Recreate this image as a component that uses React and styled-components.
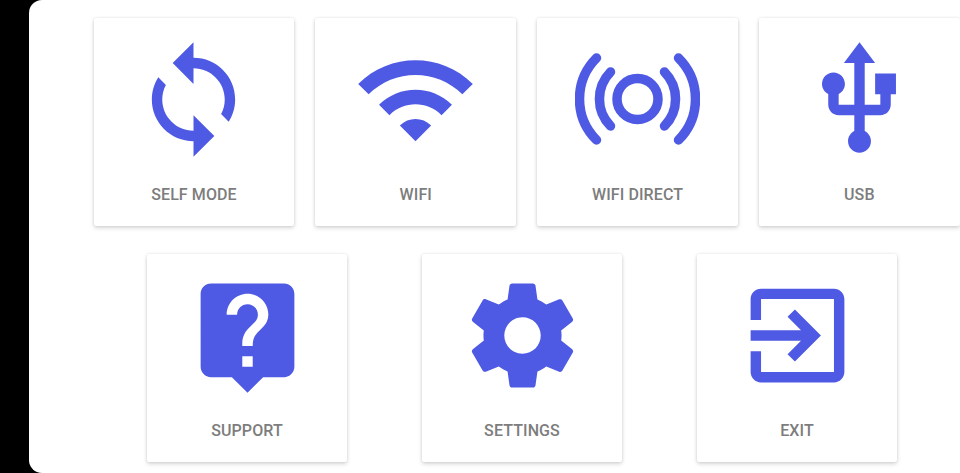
import React from "react";
import styled, { createGlobalStyle } from "styled-components";

const Global = createGlobalStyle`
  html, body { margin: 0; padding: 0; width: 960px; height: 473px; overflow: hidden; background: #000; }
  #root { width: 960px; height: 473px; }
`;

const Screen = styled.main`
  width: 960px;
  height: 473px;
  background: #000;
  padding-left: 29px;
  box-sizing: border-box;
  display: flex;
`;

const Panel = styled.section`
  flex: 1;
  background: #fff;
  border-radius: 13px 0 0 13px;
  box-sizing: border-box;
  padding-top: 18px;
  display: flex;
  flex-direction: column;
  gap: 28px;
  overflow: hidden;
`;

const Row = styled.div`
  display: flex;
  gap: ${(p) => p.$gap}px;
  padding-left: ${(p) => p.$inset}px;
`;

const Card = styled.button`
  flex: 0 0 ${(p) => p.$width}px;
  width: ${(p) => p.$width}px;
  height: 208px;
  border: 0;
  padding: 18.5px 0 0;
  margin: 0;
  background: #fff;
  border-radius: 2px;
  box-shadow: 0 2px 4px rgba(0, 0, 0, 0.16), 0 0 3px rgba(0, 0, 0, 0.09);
  display: flex;
  flex-direction: column;
  align-items: center;
`;

const Icon = styled.svg`
  display: block;
  width: 125px;
  height: 125px;
  flex: none;
  fill: #4f5ae4;
`;

const Label = styled.span`
  margin-top: 24px;
  font-family: Roboto, "Liberation Sans", sans-serif;
  font-weight: 500;
  font-size: 16px;
  letter-spacing: 0.1px;
  line-height: 18px;
  color: #7d7d7d;
  white-space: nowrap;
`;

const Arc = styled.path`
  fill: none;
  stroke: #4f5ae4;
  stroke-width: 9.5;
  stroke-linecap: round;
`;

const Ring = styled.circle`
  fill: none;
  stroke: #4f5ae4;
  stroke-width: 9.5;
`;

const material = (d) => (
  <Icon viewBox="0 0 24 24" aria-hidden="true">
    <path d={d} />
  </Icon>
);

const icons = {
  sync: material("M12 4V1L8 5l4 4V6c3.31 0 6 2.69 6 6 0 1.01-.25 1.97-.7 2.8l1.46 1.46C19.54 15.03 20 13.57 20 12c0-4.42-3.58-8-8-8zm0 14c-3.31 0-6-2.69-6-6 0-1.01.25-1.97.7-2.8L5.24 7.74C4.46 8.97 4 10.43 4 12c0 4.42 3.58 8 8 8v3l4-4-4-4v3z"),
  wifi: material("M1 9l2 2c4.97-4.97 13.03-4.97 18 0l2-2C16.93 2.93 7.08 2.93 1 9zm8 8l3 3 3-3c-1.65-1.66-4.34-1.66-6 0zm-4-4l2 2c2.76-2.76 7.24-2.76 10 0l2-2C15.14 9.14 8.87 9.14 5 13z"),
  direct: (
    <Icon viewBox="0 0 125 125" aria-hidden="true">
      <Ring cx="62.5" cy="62" r="20.5" />
      <Arc d="M35.5 35A38.5 38.5 0 0 0 35.5 89" />
      <Arc d="M89.5 35A38.5 38.5 0 0 1 89.5 89" />
      <Arc d="M21.5 21A58 58 0 0 0 21.5 103" />
      <Arc d="M103.5 21A58 58 0 0 1 103.5 103" />
    </Icon>
  ),
  usb: material("M15 7v4h1v2h-3V5h2l-3-4-3 4h2v8H8v-2.07c.7-.37 1.2-1.08 1.2-1.93 0-1.21-.99-2.2-2.2-2.2-1.21 0-2.2.99-2.2 2.2 0 .85.5 1.56 1.2 1.93V13c0 1.11.89 2 2 2h3v3.05c-.71.37-1.2 1.1-1.2 1.95 0 1.22.99 2.2 2.2 2.2 1.21 0 2.2-.98 2.2-2.2 0-.85-.49-1.58-1.2-1.95V15h3c1.11 0 2-.89 2-2v-2h1V7h-4z"),
  support: material("M19 2H5c-1.11 0-2 .9-2 2v14c0 1.1.89 2 2 2h4l3 3 3-3h4c1.1 0 2-.9 2-2V4c0-1.1-.9-2-2-2zm-6 16h-2v-2h2v2zm2.07-7.75l-.9.92C13.45 11.9 13 12.5 13 14h-2v-.5c0-1.1.45-2.1 1.17-2.83l1.24-1.26c.37-.36.59-.86.59-1.41 0-1.1-.9-2-2-2s-2 .9-2 2H8c0-2.21 1.79-4 4-4s4 1.79 4 4c0 .88-.36 1.68-.93 2.25z"),
  settings: material("M19.43 12.98c.04-.32.07-.64.07-.98s-.03-.66-.07-.98l2.11-1.65c.19-.15.24-.42.12-.64l-2-3.46c-.12-.22-.39-.3-.61-.22l-2.49 1c-.52-.4-1.08-.73-1.69-.98l-.38-2.65C14.46 2.18 14.25 2 14 2h-4c-.25 0-.46.18-.49.42l-.38 2.65c-.61.25-1.17.59-1.69.98l-2.49-1c-.23-.09-.49 0-.61.22l-2 3.46c-.13.22-.07.49.12.64l2.11 1.65c-.04.32-.07.65-.07.98s.03.66.07.98l-2.11 1.65c-.19.15-.24.42-.12.64l2 3.46c.12.22.39.3.61.22l2.49-1c.52.4 1.08.73 1.69.98l.38 2.65c.03.24.24.42.49.42h4c.25 0 .46-.18.49-.42l.38-2.65c.61-.25 1.17-.59 1.69-.98l2.49 1c.23.09.49 0 .61-.22l2-3.46c.12-.22.07-.49-.12-.64l-2.11-1.65zM12 15.5c-1.93 0-3.5-1.57-3.5-3.5s1.57-3.5 3.5-3.5 3.5 1.57 3.5 3.5-1.57 3.5-3.5 3.5z"),
  exit: material("M10.09 15.59L11.5 17l5-5-5-5-1.41 1.41L12.67 11H3v2h9.67l-2.58 2.59zM19 3H5c-1.11 0-2 .9-2 2v4h2V5h14v14H5v-4H3v4c0 1.1.89 2 2 2h14c1.1 0 2-.9 2-2V5c0-1.1-.9-2-2-2z"),
};

const top = [
  ["sync", "SELF MODE"],
  ["wifi", "WIFI"],
  ["direct", "WIFI DIRECT"],
  ["usb", "USB"],
];
const bottom = [
  ["support", "SUPPORT"],
  ["settings", "SETTINGS"],
  ["exit", "EXIT"],
];

const Tile = ({ icon, label, width }) => (
  <Card type="button" $width={width}>
    {icons[icon]}
    <Label>{label}</Label>
  </Card>
);

export default function App() {
  return (
    <Screen>
      <Global />
      <Panel>
        <Row $inset={64.7} $gap={21.2}>
          {top.map(([i, l]) => <Tile key={l} icon={i} label={l} width={200.6} />)}
        </Row>
        <Row $inset={118} $gap={75}>
          {bottom.map(([i, l]) => <Tile key={l} icon={i} label={l} width={200} />)}
        </Row>
      </Panel>
    </Screen>
  );
}
